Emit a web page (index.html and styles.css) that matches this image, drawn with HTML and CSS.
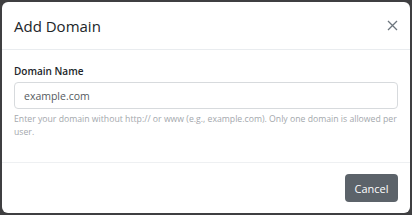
FILE: index.html
```html
<!DOCTYPE html>
<html>
<head>
  <meta charset="UTF-8">
  <title>Add Domain</title>
  <link rel="stylesheet" href="styles.css">
</head>
<body>
  <div class="modal">
    <div class="modal-header">
      <h2 class="modal-title">Add Domain</h2>
      <button class="close-btn" aria-label="Close">
        <svg width="11" height="11" viewBox="0 0 11 11">
          <path d="M1 1 L10 10 M10 1 L1 10" stroke="#6c757d" stroke-width="1.3" fill="none"/>
        </svg>
      </button>
    </div>
    <div class="modal-body">
      <label for="domainName">Domain Name</label>
      <input type="text" id="domainName" placeholder="example.com">
      <p class="help-text">Enter your domain without http:// or www (e.g., example.com). Only one domain is allowed per user.</p>
    </div>
    <div class="modal-footer">
      <button class="btn-cancel">Cancel</button>
    </div>
  </div>
</body>
</html>
```

FILE: styles.css
```css
/* Backdrop */
html, body {
  margin: 0;
  padding: 0;
  height: 100%;
}
body {
  background-color: #3f3f41;
  padding: 2px;
  box-sizing: border-box;
  font-family: 'Open Sans', sans-serif;
}
.modal {
  width: 408px;
  height: 211px;
  background: #ffffff;
  border-radius: 6px;
  display: flex;
  flex-direction: column;
  overflow: hidden;
}
.modal-header {
  height: 47px;
  display: flex;
  align-items: center;
  justify-content: space-between;
  padding: 0 11px 0 12px;
  border-bottom: 1px solid #e9ecef;
}
.modal-title {
  margin: 0;
  font-size: 15px;
  font-weight: 500;
  color: #212529;
}
.close-btn {
  background: none;
  border: none;
  padding: 0;
  width: 14px;
  height: 14px;
  display: flex;
  align-items: center;
  justify-content: center;
  cursor: pointer;
}
.modal-body {
  padding: 14px 12px 0 12px;
  flex: 1;
  border-bottom: 1px solid #eef0f2;
}
label {
  display: block;
  font-size: 10px;
  line-height: 14px;
  font-weight: 600;
  color: #212529;
  margin-bottom: 4px;
}
input[type="text"] {
  width: 100%;
  box-sizing: border-box;
  height: 27px;
  padding: 0 9px;
  border: 1px solid #d7dadd;
  border-radius: 4px;
  font-family: 'Open Sans', sans-serif;
  font-size: 10.5px;
  color: #495057;
  outline: none;
}
input[type="text"]::placeholder {
  color: #555b61;
}
.help-text {
  margin: 4px 0 0 0;
  font-size: 8.7px;
  line-height: 13px;
  color: #a4a8ad;
}
.modal-footer {
  height: 50px;
  display: flex;
  align-items: center;
  justify-content: flex-end;
  padding: 0 12px;
}
.btn-cancel {
  background-color: #5c636a;
  color: #ffffff;
  border: none;
  border-radius: 4px;
  width: 53px;
  height: 28px;
  font-family: 'Open Sans', sans-serif;
  font-size: 11px;
  cursor: pointer;
}
```
